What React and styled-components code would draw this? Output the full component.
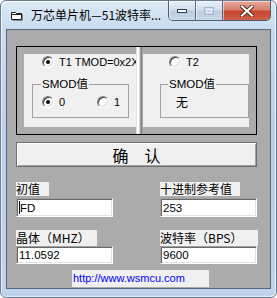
import styled, { createGlobalStyle } from "styled-components"

const GlobalStyle = createGlobalStyle`
  html, body { margin: 0; padding: 0; background: #ffffff; }
  body {
    width: 277px;
    height: 298px;
    overflow: hidden;
    font-family: "Liberation Sans", "Noto Sans CJK SC", sans-serif;
  }
  * { box-sizing: border-box; }
`;

const Window = styled.div`
  width: 277px;
  height: 298px;
  border: 1px solid #6c7c93;
  border-radius: 6px;
  padding: 0 5px 8px 5px;
  background: linear-gradient(180deg, #dce9f6 0%, #c9dcf0 9%, #b9d1ea 45%, #bdd4ec 100%);
  box-shadow: inset 1px 1px 0 rgba(255, 255, 255, 0.75), inset -1px -1px 0 rgba(255, 255, 255, 0.6);
  display: flex;
  flex-direction: column;
  overflow: hidden;
`;

const TitleBar = styled.div`
  height: 28px;
  display: flex;
  align-items: flex-start;
`;

const TitleIcon = styled.svg`
  margin: 10px 0 0 5px;
  width: 12px;
  height: 10px;
  flex: none;
`;

const TitleText = styled.div`
  margin: 6px 0 0 8px;
  font-family: "Noto Sans CJK SC", sans-serif;
  font-size: 12px;
  line-height: 16px;
  color: #000;
  white-space: nowrap;
`;

const Caption = styled.div`
  margin-left: auto;
  display: flex;
  height: 20px;
  border: 1px solid #4e5d74;
  border-top: none;
  border-radius: 0 0 5px 5px;
  overflow: hidden;
`;

const CapBtn = styled.div`
  width: ${p => p.$w}px;
  height: 100%;
  display: flex;
  align-items: center;
  justify-content: center;
  border-left: ${p => (p.$first ? "none" : "1px solid #5b6a80")};
  background: ${p =>
    p.$close
      ? "linear-gradient(180deg, #e9a99b 0%, #d88270 45%, #c7452d 55%, #d0614b 100%)"
      : "linear-gradient(180deg, #e6eef8 0%, #d3e0ee 45%, #bccde0 55%, #c9d8e9 100%)"};
  box-shadow: inset 1px 1px 0 rgba(255, 255, 255, 0.55);
`;

const Client = styled.div`
  flex: 1;
  border: 1px solid #56677e;
  background: #ababab;
  display: flex;
  flex-direction: column;
  align-items: flex-start;
`;

const FrameBox = styled.div`
  margin: 16px 0 0 9px;
  width: 241px;
  height: 89px;
  border: 1px solid #000;
  display: flex;
`;

const Pane = styled.div`
  width: ${p => p.$w}px;
  padding: ${p => p.$pad};
  display: flex;
`;

const Light = styled.div`
  flex: 1;
  background: #f0f0f0;
  overflow: hidden;
  display: flex;
  flex-direction: column;
  align-items: flex-start;
`;

const Divider = styled.div`
  width: 6px;
  background: linear-gradient(90deg, #e2e2e2 0 1px, #ffffff 1px 3px, #d6d6d6 3px 4px, #a3a3a3 4px 5px, #7f7f7f 5px 6px);
`;

const RadioRow = styled.div`
  display: flex;
  align-items: center;
  height: 12px;
  margin: ${p => p.$m};
`;

const RadioItem = styled.div`
  display: flex;
  align-items: center;
  width: ${p => (p.$w ? `${p.$w}px` : "auto")};
  flex: none;
`;

const RadioDot = styled.span`
  position: relative;
  width: 12px;
  height: 12px;
  flex: none;
  border-radius: 50%;
  border: 1px solid;
  border-color: #808080 #ffffff #ffffff #808080;
  background: #ffffff;
  box-shadow: inset 1px 1px 0 #404040, inset -1px -1px 0 #d4d4d4;

  &::after {
    content: "";
    display: ${p => (p.$on ? "block" : "none")};
    position: absolute;
    left: 3px;
    top: 3px;
    width: 4px;
    height: 4px;
    border-radius: 50%;
    background: #000;
  }
`;

const RadioText = styled.span`
  margin-left: 5px;
  font-size: 11px;
  line-height: 12px;
  color: #000;
  white-space: nowrap;
`;

const Group = styled.fieldset`
  margin: ${p => p.$m};
  width: ${p => p.$w}px;
  padding: 0 0 9px 0;
  border: 1px solid #a0a0a0;
  min-width: 0;
`;

const Legend = styled.legend`
  margin-left: ${p => p.$ml}px;
  padding: 0 1px;
  font-size: 11.5px;
  line-height: 12px;
  color: #000;
`;

const PlainText = styled.div`
  margin: 6px 0 0 15px;
  height: 12px;
  font-family: "Noto Sans CJK SC", sans-serif;
  font-size: 12px;
  line-height: 12px;
  color: #000;
`;

const Button = styled.div`
  margin: 7px 0 0 9px;
  width: 241px;
  height: 25px;
  border: 1px solid #6f6f6f;
  background: #f0f0f0;
  box-shadow: inset 1px 1px 0 #ffffff, inset -1px -1px 0 #a0a0a0;
  display: flex;
  align-items: center;
  justify-content: center;
  font-family: "Noto Sans CJK SC", sans-serif;
  font-size: 16px;
  color: #000;
`;

const Fields = styled.div`
  margin: 15px 0 0 9px;
  display: grid;
  grid-template-columns: 97px 98px;
  column-gap: 47px;
  align-items: start;
`;

const FieldLabel = styled.div`
  width: ${p => p.$w}px;
  height: ${p => p.$h}px;
  margin-top: ${p => p.$mt || 0}px;
  background: #f0f0f0;
  font-family: "Noto Sans CJK SC", sans-serif;
  font-size: 12px;
  line-height: ${p => p.$h}px;
  color: #000;
  white-space: nowrap;
`;

const TextBox = styled.div`
  width: ${p => p.$w}px;
  height: ${p => p.$h}px;
  margin-top: ${p => p.$mt || 0}px;
  border: 1px solid;
  border-color: #a0a0a0 #ffffff #ffffff #a0a0a0;
  box-shadow: inset 1px 1px 0 #696969, inset -1px -1px 0 #e3e3e3;
  background: #ffffff;
  padding-left: 2px;
  display: flex;
  align-items: center;
  font-size: 11.5px;
  color: #000;
`;

const Caret = styled.span`
  width: 1px;
  height: 13px;
  background: #000;
`;

const Link = styled.div`
  margin: 6px 0 0 65px;
  width: 137px;
  height: 17px;
  padding-left: 1px;
  background: #f0f0f0;
  font-size: 11px;
  line-height: 17px;
  color: #0000ff;
`;

function Radio({ on, text, w }) {
  return (
    <RadioItem $w={w}>
      <RadioDot $on={on} />
      <RadioText>{text}</RadioText>
    </RadioItem>
  );
}

export default function App() {
  return (
    <>
      <GlobalStyle />
      <Window>
        <TitleBar>
          <TitleIcon viewBox="0 0 12 10">
            <path d="M0.5 1.5 H4.5 L5.5 2.5 H10.5 V8.5 H0.5 Z" fill="#ffffff" stroke="#1a1a1a" />
            <path d="M0.5 3.5 H10.5" stroke="#1a1a1a" />
            <path d="M11.5 3 V9.5 H1.5" stroke="#8a8a8a" fill="none" />
          </TitleIcon>
          <TitleText>万芯单片机—51波特率...</TitleText>
          <Caption>
            <CapBtn $w={26} $first>
              <svg width="12" height="6" viewBox="0 0 12 6">
                <rect x="1.5" y="1.5" width="9" height="3" fill="#ffffff" stroke="#2c3e5a" />
              </svg>
            </CapBtn>
            <CapBtn $w={27}>
              <svg width="12" height="10" viewBox="0 0 12 10">
                <rect x="1.5" y="1.5" width="9" height="7" fill="none" stroke="#a9b6c6" />
                <rect x="3.5" y="3.5" width="5" height="3" fill="none" stroke="#e9eff6" />
              </svg>
            </CapBtn>
            <CapBtn $w={48} $close>
              <svg width="14" height="12" viewBox="0 0 14 12">
                <path d="M2 1.5 L12 10.5 M12 1.5 L2 10.5" stroke="#5a2418" strokeWidth="4" strokeLinecap="square" />
                <path d="M2 1.5 L12 10.5 M12 1.5 L2 10.5" stroke="#ffffff" strokeWidth="2.2" strokeLinecap="square" />
              </svg>
            </CapBtn>
          </Caption>
        </TitleBar>

        <Client>
          <FrameBox>
            <Pane $w={119} $pad="7px 0 7px 7px">
              <Light>
                <RadioRow $m="2px 0 0 18px">
                  <Radio on text="T1 TMOD=0x2X" />
                </RadioRow>
                <Group $m="10px 0 0 8px" $w={97}>
                  <Legend $ml={8}>SMOD值</Legend>
                  <RadioRow $m="6px 0 0 9px">
                    <Radio on text="0" w={55} />
                    <Radio text="1" />
                  </RadioRow>
                </Group>
              </Light>
            </Pane>
            <Divider />
            <Pane $w={114} $pad="7px 7px 7px 1px">
              <Light>
                <RadioRow $m="2px 0 0 26px">
                  <Radio text="T2" />
                </RadioRow>
                <Group $m="10px 0 0 17px" $w={89}>
                  <Legend $ml={7}>SMOD值</Legend>
                  <PlainText>无</PlainText>
                </Group>
              </Light>
            </Pane>
          </FrameBox>

          <Button>确　认</Button>

          <Fields>
            <FieldLabel $w={33} $h={14}>初值</FieldLabel>
            <FieldLabel $w={80} $h={14}>十进制参考值</FieldLabel>
            <TextBox $w={97} $h={19} $mt={2}>
              <Caret />
              FD
            </TextBox>
            <TextBox $w={97} $h={19} $mt={2}>253</TextBox>
            <FieldLabel $w={81} $h={16} $mt={13}>晶体（MHZ）</FieldLabel>
            <FieldLabel $w={98} $h={16} $mt={13}>波特率（BPS）</FieldLabel>
            <TextBox $w={97} $h={18}>11.0592</TextBox>
            <TextBox $w={97} $h={18}>9600</TextBox>
          </Fields>

          <Link>http://www.wsmcu.com</Link>
        </Client>
      </Window>
    </>
  );
}
